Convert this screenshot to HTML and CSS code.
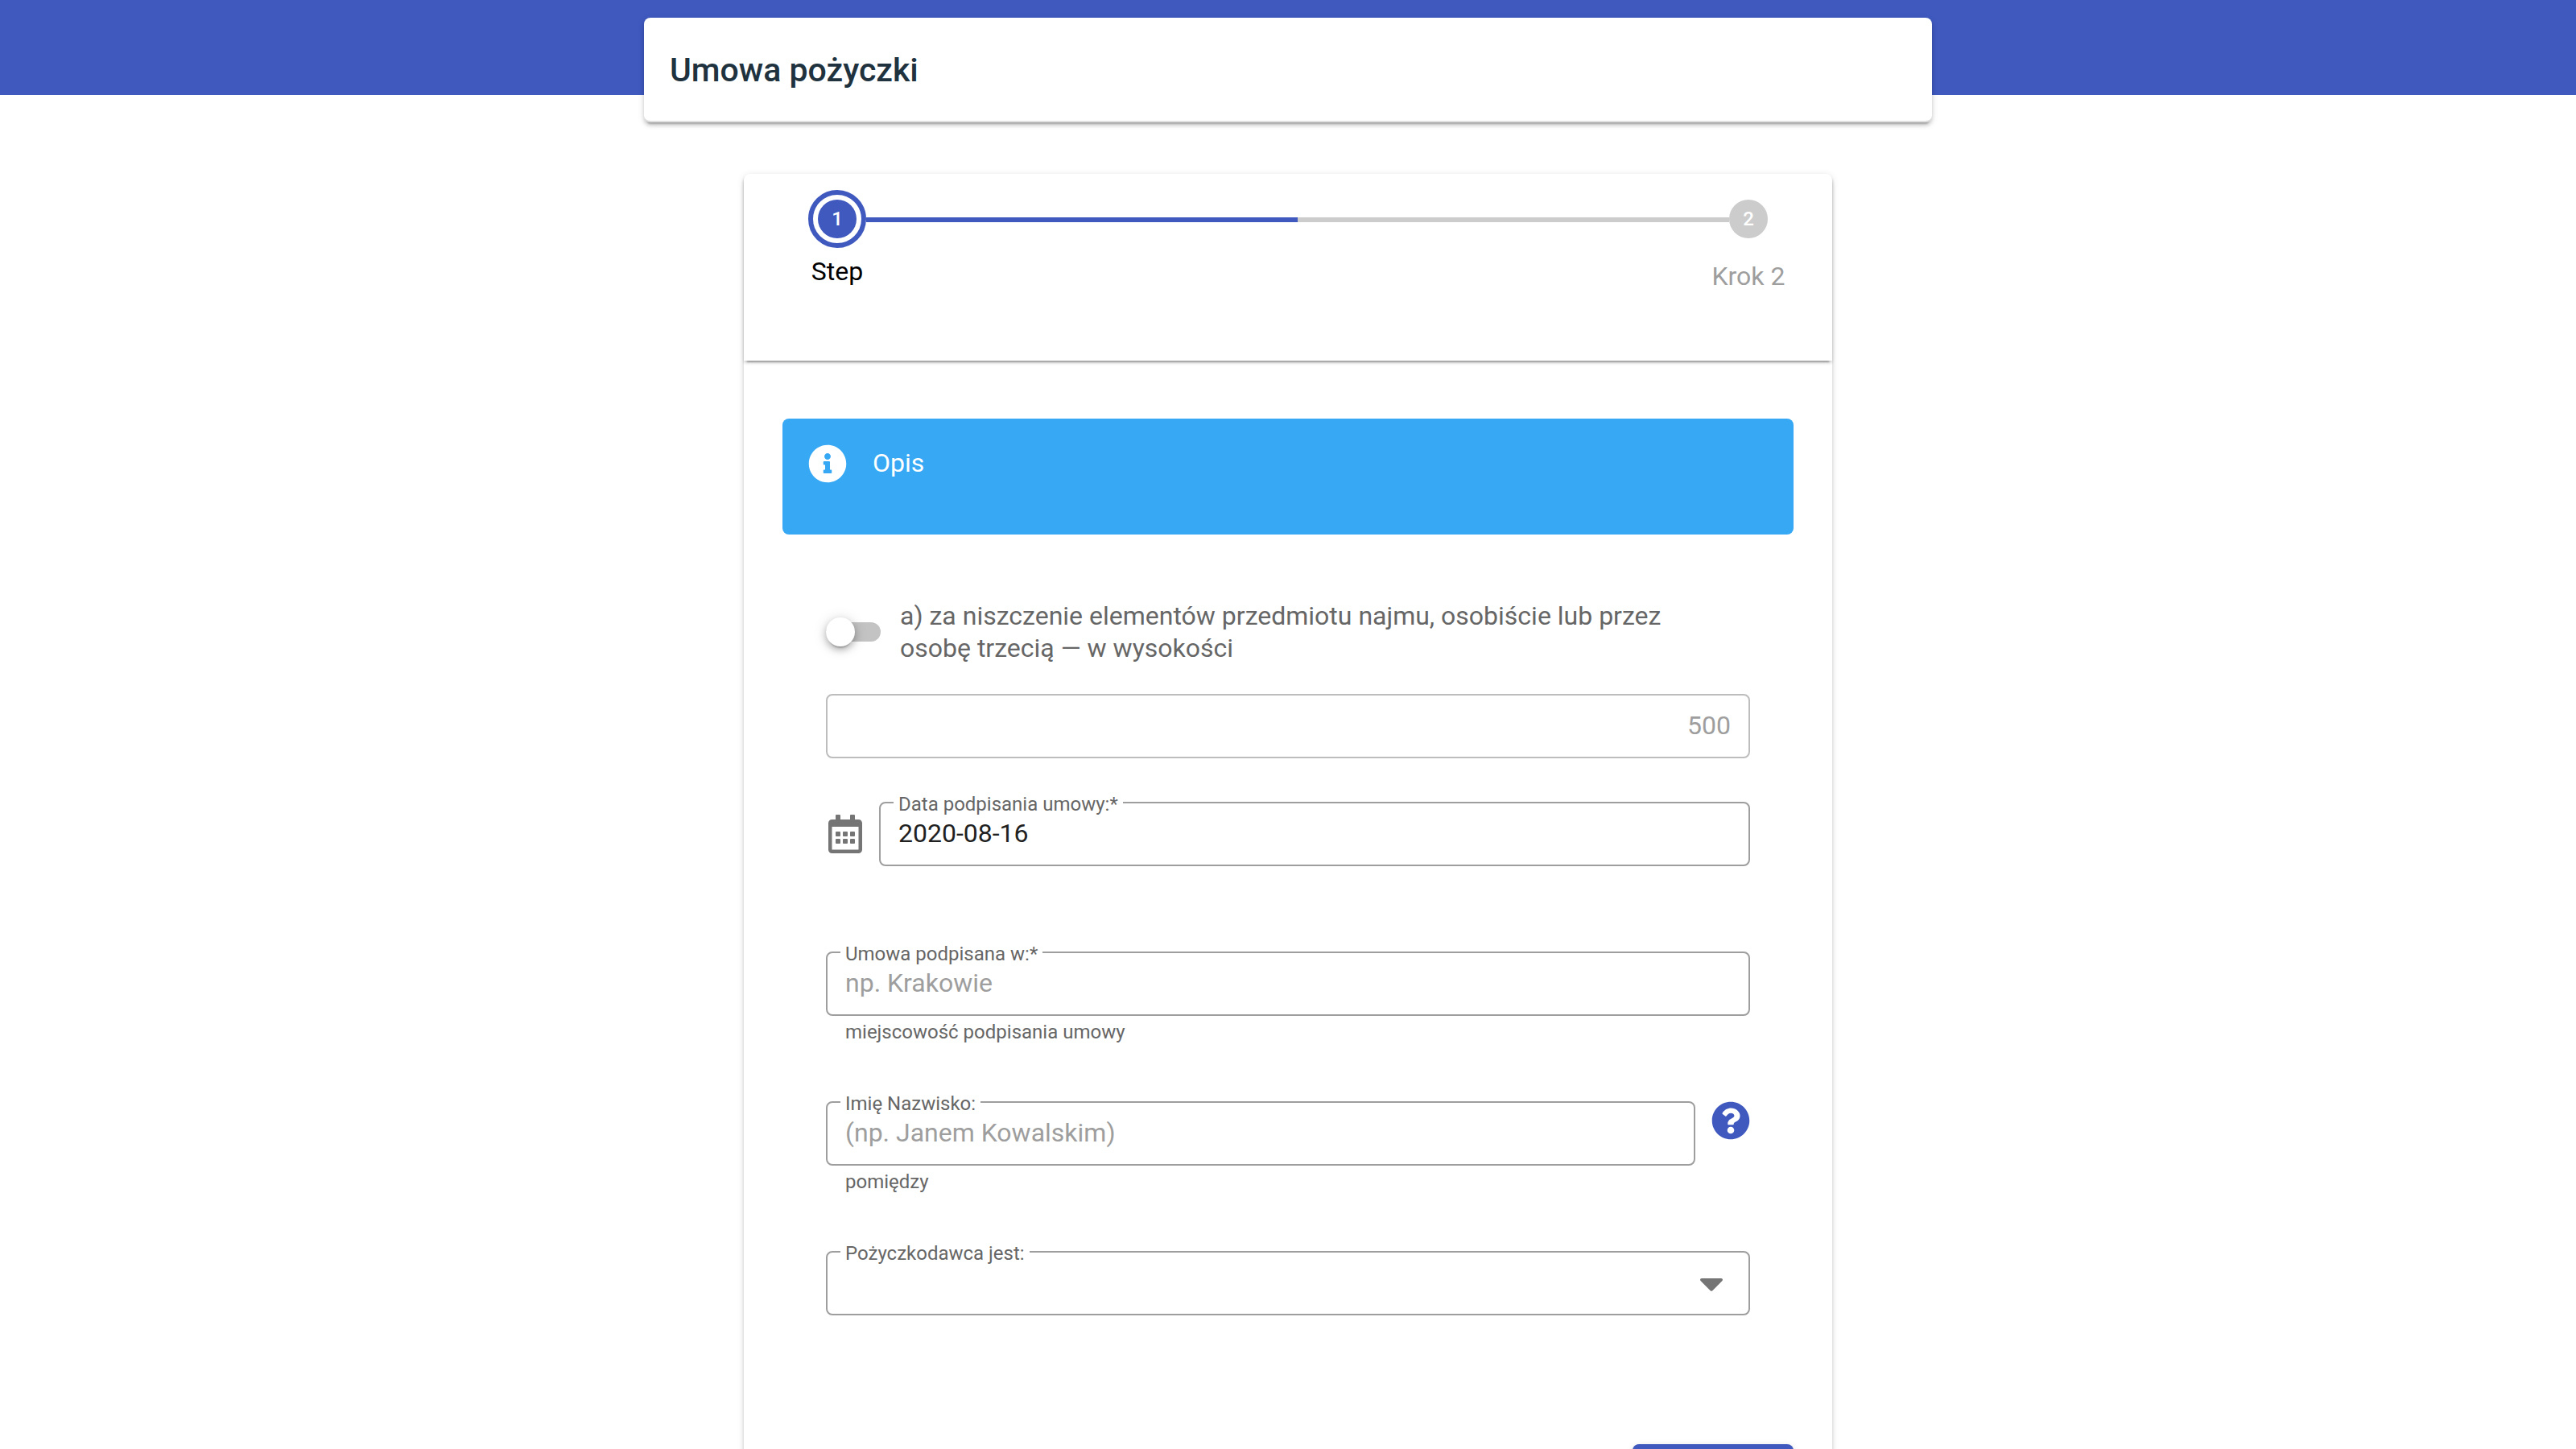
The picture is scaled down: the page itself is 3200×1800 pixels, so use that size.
FILE: index.html
```html
<!DOCTYPE html>
<html lang="pl">
<head>
<meta charset="utf-8">
<meta name="viewport" content="width=device-width, initial-scale=1">
<title>Umowa pożyczki</title>
<link rel="stylesheet" href="styles.css">
</head>
<body>
<header class="topbar">
  <div class="title-card"><h1 class="title">Umowa pożyczki</h1></div>
</header>
<main class="page">
  <div class="card">
    <ol class="stepper">
      <li class="step step-active">
        <span class="step-ring"><span class="step-dot">1</span></span>
        <span class="step-label">Step</span>
      </li>
      <li class="step-line" role="presentation"><span class="step-line-done"></span></li>
      <li class="step step-next">
        <span class="step-dot">2</span>
        <span class="step-label">Krok 2</span>
      </li>
    </ol>
    <form class="form">
      <div class="notice">
        <svg class="icon" viewBox="0 0 512 512" aria-hidden="true"><path d="M256 8C119.043 8 8 119.083 8 256c0 136.997 111.043 248 248 248s248-111.003 248-248C504 119.083 392.957 8 256 8zm0 110c23.196 0 42 18.804 42 42s-18.804 42-42 42-42-18.804-42-42 18.804-42 42-42zm56 254c0 6.627-5.373 12-12 12h-88c-6.627 0-12-5.373-12-12v-24c0-6.627 5.373-12 12-12h12v-64h-12c-6.627 0-12-5.373-12-12v-24c0-6.627 5.373-12 12-12h64c6.627 0 12 5.373 12 12v100h12c6.627 0 12 5.373 12 12v24z"/></svg>
        <p class="notice-text">Opis</p>
      </div>
      <div class="fields">
        <div class="switch-row">
          <input class="switch" type="checkbox" role="switch" id="penalty">
          <label class="switch-label" id="penalty-label" for="penalty">a) za niszczenie elementów przedmiotu najmu, osobiście lub przez osobę trzecią — w wysokości</label>
        </div>
        <div class="field field-disabled">
          <input class="control control-amount" type="text" placeholder="500" aria-labelledby="penalty-label" disabled>
        </div>
        <div class="row row-date">
          <svg class="icon icon-calendar" viewBox="0 0 448 512" aria-hidden="true"><path d="M148 288h-40c-6.6 0-12-5.4-12-12v-40c0-6.6 5.4-12 12-12h40c6.6 0 12 5.4 12 12v40c0 6.6-5.4 12-12 12zm108-12v-40c0-6.6-5.4-12-12-12h-40c-6.6 0-12 5.4-12 12v40c0 6.6 5.4 12 12 12h40c6.6 0 12-5.4 12-12zm96 0v-40c0-6.6-5.4-12-12-12h-40c-6.6 0-12 5.4-12 12v40c0 6.6 5.4 12 12 12h40c6.6 0 12-5.4 12-12zm-96 96v-40c0-6.6-5.4-12-12-12h-40c-6.6 0-12 5.4-12 12v40c0 6.6 5.4 12 12 12h40c6.6 0 12-5.4 12-12zm-96 0v-40c0-6.6-5.4-12-12-12h-40c-6.6 0-12 5.4-12 12v40c0 6.6 5.4 12 12 12h40c6.6 0 12-5.4 12-12zm192 0v-40c0-6.6-5.4-12-12-12h-40c-6.6 0-12 5.4-12 12v40c0 6.6 5.4 12 12 12h40c6.6 0 12-5.4 12-12zm96-260v352c0 26.5-21.5 48-48 48H48c-26.5 0-48-21.5-48-48V112c0-26.5 21.5-48 48-48h48V12c0-6.6 5.4-12 12-12h40c6.6 0 12 5.4 12 12v52h128V12c0-6.6 5.4-12 12-12h40c6.6 0 12 5.4 12 12v52h48c26.5 0 48 21.5 48 48zm-48 346V160H48v298c0 3.3 2.7 6 6 6h340c3.3 0 6-2.7 6-6z"/></svg>
          <div class="field">
            <input class="control" type="text" id="date" value="2020-08-16">
            <label class="field-label" for="date">Data podpisania umowy:*</label>
          </div>
        </div>
        <div class="row">
          <div class="field">
            <input class="control" type="text" id="place" placeholder="np. Krakowie" aria-describedby="place-help">
            <label class="field-label" for="place">Umowa podpisana w:*</label>
            <p class="helper" id="place-help">miejscowość podpisania umowy</p>
          </div>
        </div>
        <div class="row">
          <div class="field">
            <input class="control" type="text" id="name" placeholder="(np. Janem Kowalskim)" aria-describedby="name-help">
            <label class="field-label" for="name">Imię Nazwisko:</label>
            <p class="helper" id="name-help">pomiędzy</p>
          </div>
          <button class="help" type="button" aria-label="Pomoc">
            <svg class="icon" viewBox="0 0 512 512" aria-hidden="true"><path d="M504 256c0 136.997-111.043 248-248 248S8 392.997 8 256C8 119.083 119.043 8 256 8s248 111.083 248 248zM262.655 90c-54.497 0-89.255 22.957-116.549 63.758-3.536 5.286-2.353 12.415 2.715 16.258l34.699 26.31c5.205 3.947 12.621 3.008 16.665-2.122 17.864-22.658 30.113-35.797 57.303-35.797 20.429 0 45.698 13.148 45.698 32.958 0 14.976-12.363 22.667-32.534 33.976C247.128 238.528 216 254.941 216 296v4c0 6.627 5.373 12 12 12h56c6.627 0 12-5.373 12-12v-1.333c0-28.462 83.186-29.647 83.186-106.667 0-58.002-60.165-102-116.531-102zM256 338c-25.365 0-46 20.635-46 46 0 25.364 20.635 46 46 46s46-20.636 46-46c0-25.364-20.635-46-46-46z"/></svg>
          </button>
        </div>
        <div class="row">
          <div class="field">
            <select class="control" id="lender"><option value=""></option></select>
            <label class="field-label" for="lender">Pożyczkodawca jest:</label>
            <svg class="arrow" viewBox="0 0 28 16" aria-hidden="true"><path d="M2 0h24c2 0 2.500 2 1.300 3.200L15.400 15.200c-.8.800-2 .8-2.800 0L.7 3.200C-.5 2 0 0 2 0z"/></svg>
          </div>
        </div>
      </div>
      <div class="actions"><button class="submit" type="submit" aria-label="Dalej"></button></div>
    </form>
  </div>
</main>
</body>
</html>
```

FILE: styles.css
```css
:root {
  --primary: #3f59bf;
  --info: #36a8f4;
  --text-soft: #666;
  --outline: #9e9e9e;
  --icon: #757575;
  --shadow: 0 6px 2px -4px rgba(0, 0, 0, .2), 0 4px 4px 0 rgba(0, 0, 0, .14), 0 2px 10px 0 rgba(0, 0, 0, .12);
}

* { box-sizing: border-box; }

body {
  margin: 0;
  background: #fff;
  color: #000;
  font-family: Roboto, "Liberation Sans", sans-serif;
  font-size: 32px;
  line-height: 40px;
}

h1, p, ol { margin: 0; padding: 0; }

.topbar {
  height: 118px;
  padding-top: 22px;
  background: var(--primary);
}

.title-card {
  max-width: 1600px;
  margin: 0 auto;
  padding: 33px 32px 31px;
  background: #fff;
  border-bottom: 2px solid #e0e0e0;
  border-radius: 8px;
  box-shadow: var(--shadow);
}

.title {
  color: #20323e;
  font-size: 41px;
  font-weight: 500;
  line-height: 64px;
}

.page { padding-top: 98px; }

.card {
  max-width: 1352px;
  margin: 0 auto;
  background: #fff;
  border-radius: 8px;
  box-shadow: var(--shadow);
}

.stepper {
  display: flex;
  align-items: flex-start;
  min-height: 232px;
  padding: 20px 80px 0;
  list-style: none;
  border-radius: 8px 8px 0 0;
  box-shadow: 0 6px 2px -4px rgba(0, 0, 0, .2), 0 3px 4px -1px rgba(0, 0, 0, .3);
}

.step {
  display: flex;
  flex-direction: column;
  align-items: center;
  white-space: nowrap;
}

.step-active { width: 72px; gap: 9px; }

.step-next {
  width: 48px;
  gap: 27px;
  padding-top: 12px;
  color: var(--outline);
}

.step-ring {
  padding: 6px;
  border: 6px solid var(--primary);
  border-radius: 50%;
}

.step-dot {
  display: block;
  width: 48px;
  height: 48px;
  border-radius: 50%;
  background: #ccc;
  color: #fff;
  font-size: 24px;
  font-weight: 500;
  line-height: 48px;
  text-align: center;
}

.step-active .step-dot { background: var(--primary); }

.step-line {
  flex: 1;
  height: 6px;
  margin-top: 34px;
  background: #ccc;
}

.step-line-done {
  display: block;
  width: 50%;
  height: 100%;
  background: var(--primary);
}

.form { padding: 72px 48px 48px; }

.notice {
  display: flex;
  gap: 32px;
  min-height: 144px;
  padding: 32px;
  border-radius: 8px;
  background: var(--info);
  color: #fff;
}

.notice-text { line-height: 46px; }

.icon {
  display: block;
  flex: none;
  width: 48px;
  height: 48px;
  fill: currentColor;
}

.fields { padding: 81px 54px 0; }

.switch-row {
  display: flex;
  align-items: center;
  gap: 24px;
  margin-bottom: 37px;
  padding-right: 48px;
}

.switch {
  appearance: none;
  display: flex;
  align-items: center;
  flex: none;
  width: 68px;
  height: 24px;
  margin: 0;
  border-radius: 12px;
  background: #c3c3c3;
}

.switch::before {
  content: "";
  width: 36px;
  height: 36px;
  border-radius: 50%;
  background: #fff;
  box-shadow: 0 6px 2px -4px rgba(0, 0, 0, .2), 0 4px 8px 0 rgba(0, 0, 0, .25), 0 2px 18px 0 rgba(0, 0, 0, .14);
}

.switch-label { color: var(--text-soft); }

.row {
  display: flex;
  gap: 20px;
  min-height: 120px;
  margin-bottom: 66px;
}

.row:last-child { margin-bottom: 0; }

.row-date {
  gap: 18px;
  margin-top: 54px;
}

.icon-calendar {
  margin: 16px 0;
  color: var(--icon);
}

.field {
  position: relative;
  flex: 1;
}

.control {
  appearance: none;
  display: block;
  width: 100%;
  height: 80px;
  margin: 0;
  padding: 0 22px 2px;
  border: 2px solid var(--outline);
  border-radius: 8px;
  background: transparent;
  color: #212121;
  font: inherit;
}

.control::placeholder {
  color: var(--outline);
  opacity: 1;
}

.control-amount { text-align: right; }

.field-disabled .control { border-color: #bdbdbd; }

/* Floating label, cuts a notch in the outline */
.field-label {
  position: absolute;
  top: -11px;
  left: 18px;
  padding: 0 6px;
  background: #fff;
  color: var(--text-soft);
  font-size: 24px;
  line-height: 28px;
}

.helper {
  padding-left: 24px;
  color: var(--text-soft);
  font-size: 24px;
}

.help {
  width: 48px;
  height: 48px;
  padding: 0;
  border: 0;
  background: none;
  color: var(--primary);
}

.arrow {
  position: absolute;
  top: 34px;
  right: 34px;
  width: 28px;
  height: 16px;
  fill: var(--icon);
  pointer-events: none;
}

.actions {
  display: flex;
  justify-content: flex-end;
  padding-top: 120px;
}

.submit {
  width: 200px;
  height: 72px;
  border: 0;
  border-radius: 8px;
  background: var(--primary);
  box-shadow: var(--shadow);
}
```
